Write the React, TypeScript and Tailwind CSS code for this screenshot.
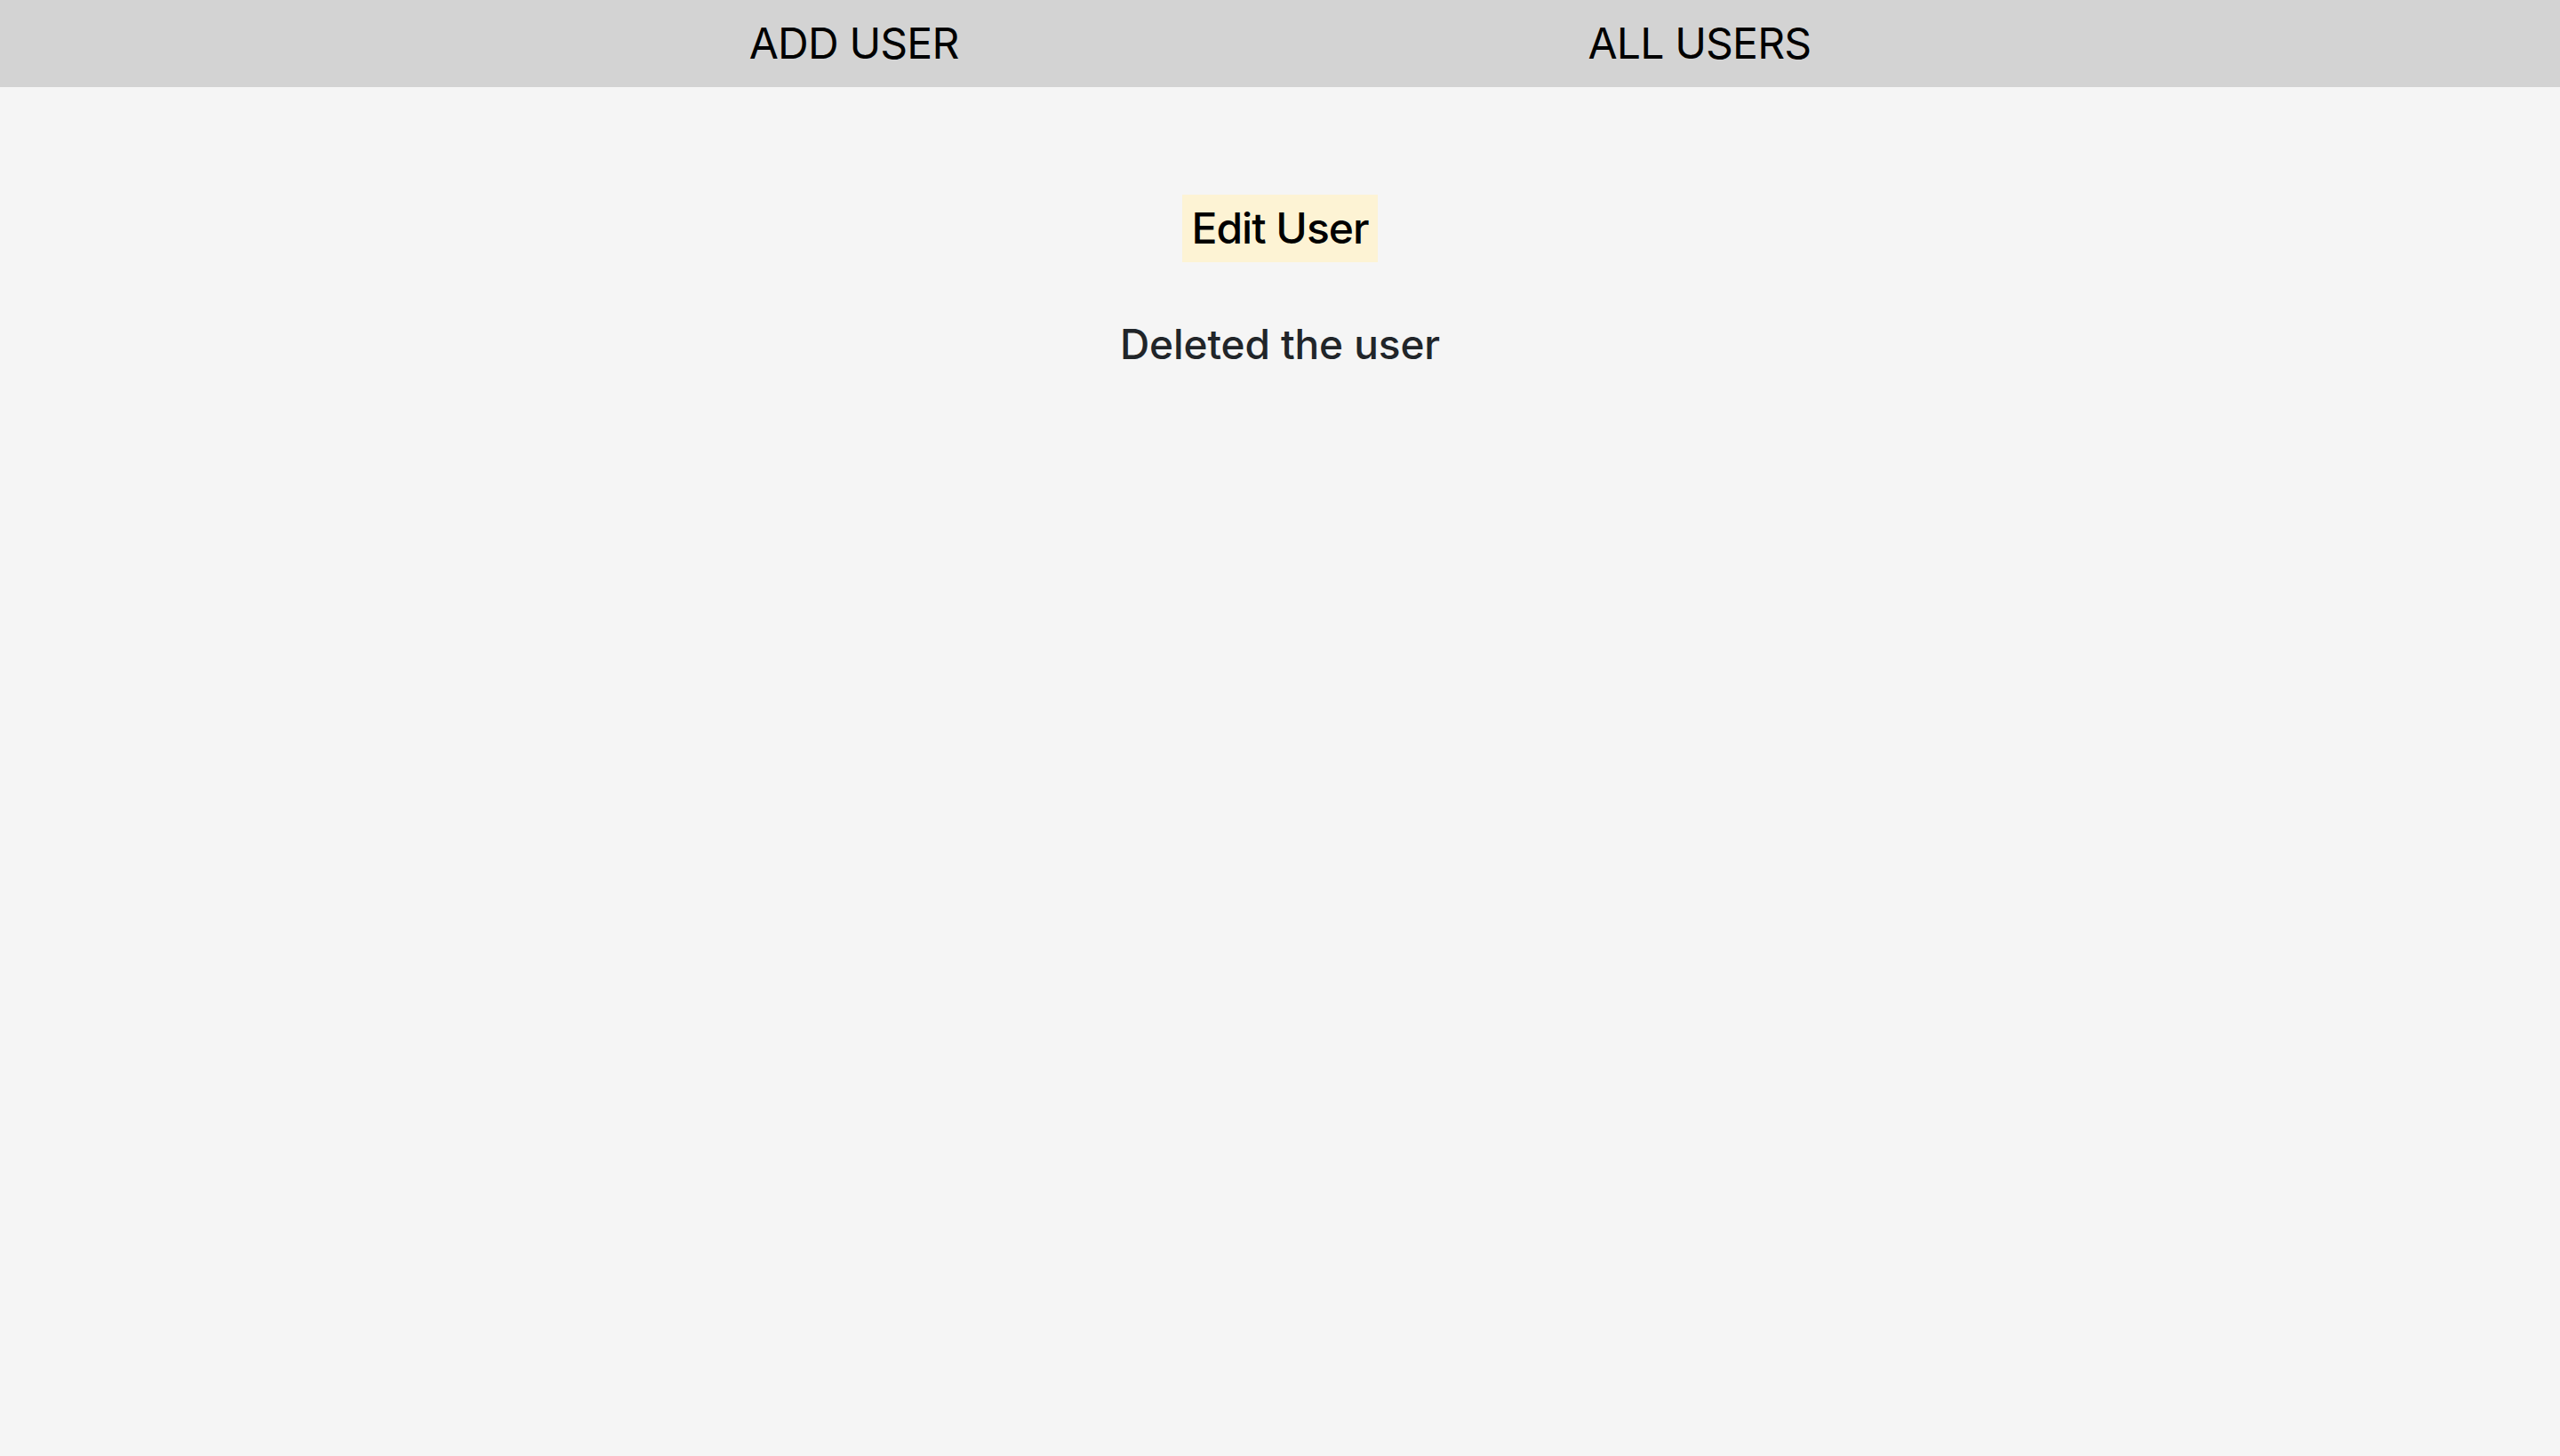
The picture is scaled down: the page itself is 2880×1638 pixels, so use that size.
export default function App() {
  const links = ["ADD USER", "ALL USERS"]

  return (
    <div className="min-h-screen bg-[#f5f5f5] font-['Inter','Liberation_Sans',sans-serif]">
      {/* Nav */}
      <nav className="flex h-[98px] items-center justify-center gap-[708px] bg-[#d3d3d3]">
        {links.map((link) => (
          <a key={link} href="#" className="text-[48px] leading-[1.2] font-normal tracking-[-0.8px] text-black">
            {link}
          </a>
        ))}
      </nav>

      {/* Content */}
      <main className="flex flex-col items-center pt-[121px]">
        <h2 className="bg-[#fdf3d4] px-[11px] py-[9px] text-[48px] leading-[1.2] font-medium tracking-[-1px] text-black">
          Edit User
        </h2>
        <h3 className="mt-[65px] text-[46px] leading-[1.2] font-medium tracking-[-0.1px] text-[#212529]">
          Deleted the user
        </h3>
      </main>
    </div>
  )
}
